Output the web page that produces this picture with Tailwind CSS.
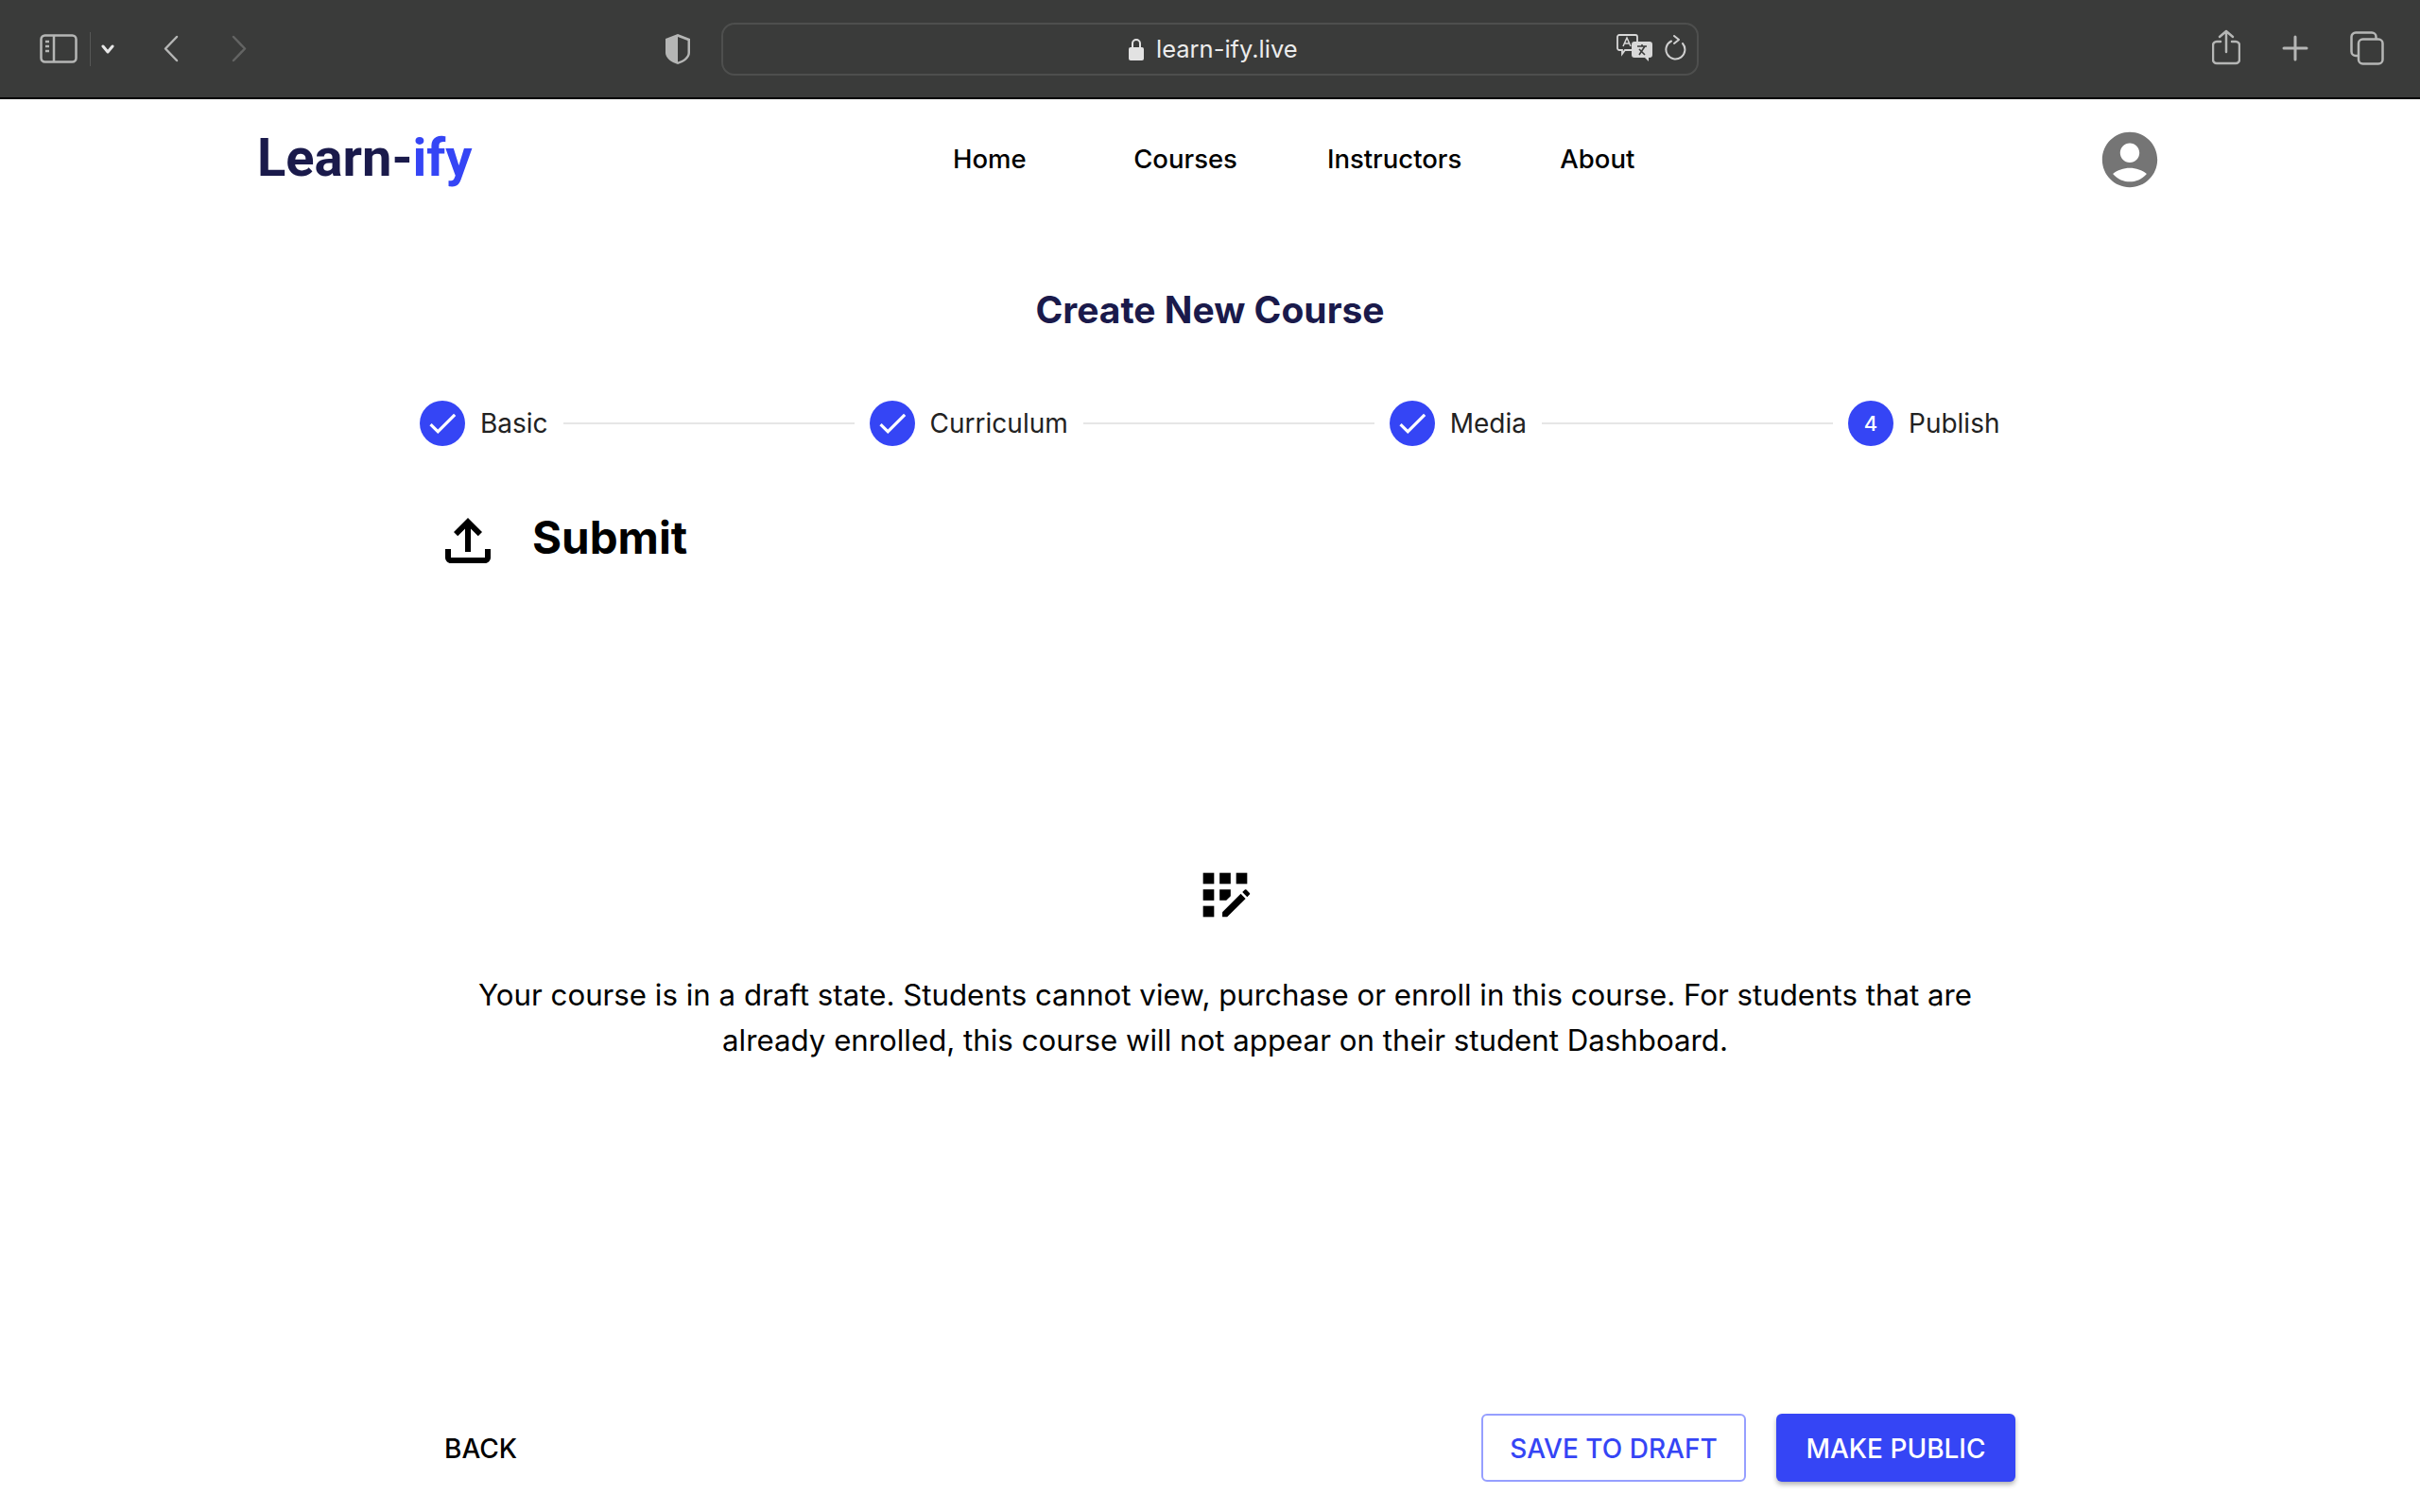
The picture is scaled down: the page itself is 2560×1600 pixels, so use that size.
<!DOCTYPE html>
<html lang="en">
<head>
    <meta charset="UTF-8">
    <title>Learn-ify</title>
    <script src="https://cdn.jsdelivr.net/npm/@tailwindcss/browser@4"></script>
</head>
<body class="bg-white text-black font-[family-name:Inter,sans-serif] w-[2560px] h-[1600px] overflow-hidden">
    <!-- browser toolbar -->
    <div class="flex items-center h-[105px] bg-[#3a3b3a] border-b-2 border-black">
        <svg class="ml-[42px] w-[40px] h-[31px]" viewBox="0 0 40 31" fill="none" stroke="#b5b6b5" stroke-width="2.5">
            <rect x="1.5" y="1.5" width="37" height="28" rx="4"/>
            <path d="M15 1.5v28M6 8h4M6 13h4M6 18h4"/>
        </svg>
        <div class="ml-[13px] w-[1px] h-[36px] bg-[#575857]"></div>
        <svg class="ml-[11px] w-[14px] h-[10px]" viewBox="0 0 14 10" fill="none" stroke="#e8e8e8" stroke-width="3" stroke-linecap="round" stroke-linejoin="round"><path d="M2 2l5 6 5-6"/></svg>
        <svg class="ml-[51px] w-[17px] h-[29px]" viewBox="0 0 17 29" fill="none" stroke="#b5b6b5" stroke-width="2.5" stroke-linecap="round" stroke-linejoin="round"><path d="M15 2L3 14.500 15 27"/></svg>
        <svg class="ml-[56px] w-[17px] h-[29px]" viewBox="0 0 17 29" fill="none" stroke="#636463" stroke-width="2.5" stroke-linecap="round" stroke-linejoin="round"><path d="M2 2l12 12.500L2 27"/></svg>
        <svg class="ml-[441px] w-[28px] h-[34px]" viewBox="0 0 28 34">
            <path d="M14 1L27 6v15c0 5-6 10-13 12C7 31 1 26 1 21V6z" fill="#b5b6b5"/>
            <path d="M14 4l10.500 4v13c0 4-5 8-10.500 9.500z" fill="#3a3b3a"/>
        </svg>
        <div class="relative ml-[32px] flex items-center w-[1034px] h-[56px] pl-[429px] border-2 border-[#4e4f4e] rounded-[14px]">
            <svg class="w-[16px] h-[24px]" viewBox="0 0 16 24" fill="none">
                <path d="M4 11V6a4 4 0 018 0v5" stroke="#e2e2e2" stroke-width="2"/>
                <rect x="0" y="10" width="16" height="14" rx="2" fill="#e2e2e2"/>
            </svg>
            <span class="ml-[13px] text-[25.5px] leading-none text-[#ececec]">learn-ify.live</span>
            <svg class="absolute left-[945px] top-[10px] w-[38px] h-[29px]" viewBox="0 0 38 29" fill="none">
                <path d="M3 1h17a2 2 0 012 2v12a2 2 0 01-2 2H9l-3 4v-4H3a2 2 0 01-2-2V3a2 2 0 012-2z" stroke="#d8d8d8" stroke-width="1.800"/>
                <path d="M7 13l4-9 4 9M8.500 10h5" stroke="#d8d8d8" stroke-width="1.500"/>
                <path d="M19 8h16a3 3 0 013 3v11a3 3 0 01-3 3h-1v4l-4-4H19a3 3 0 01-3-3V11a3 3 0 013-3z" fill="#d8d8d8"/>
                <path d="M22 13h10M27 11v2M24 22l6-9M30 22l-6-6" stroke="#3a3b3a" stroke-width="1.600"/>
            </svg>
            <svg class="absolute left-[995px] top-[11px] w-[24px] h-[28px]" viewBox="0 0 24 28" fill="none" stroke="#d0d0d0" stroke-width="2" stroke-linecap="round" stroke-linejoin="round">
                <path d="M8 6.500A10 10 0 1 0 20 9"/>
                <path d="M10 1l5 4-5 4" transform="translate(1 0)"/>
            </svg>
        </div>
        <svg class="ml-[543px] w-[30px] h-[38px] -mt-[3px]" viewBox="0 0 30 38" fill="none" stroke="#b5b6b5" stroke-width="2.500" stroke-linecap="round" stroke-linejoin="round">
            <path d="M9 13H5a4 4 0 00-4 4v15a4 4 0 004 4h20a4 4 0 004-4V17a4 4 0 00-4-4h-4"/>
            <path d="M15 24V2M8 8l7-6 7 6"/>
        </svg>
        <svg class="ml-[44px] w-[28px] h-[28px] -mt-[2px]" viewBox="0 0 28 28" fill="none" stroke="#b5b6b5" stroke-width="3" stroke-linecap="round"><path d="M14 2v24M2 14h24"/></svg>
        <svg class="ml-[44px] w-[36px] h-[36px] -mt-[1px]" viewBox="0 0 36 36" fill="none" stroke="#b5b6b5" stroke-width="2.500">
            <path d="M8 26H6a4.500 4.500 0 01-4.500-4.500V6A4.500 4.500 0 016 1.500h17A4.500 4.500 0 0127.500 6v2"/>
            <rect x="9" y="8.500" width="25.500" height="26" rx="4.500"/>
        </svg>
    </div>

    <!-- site nav -->
    <nav class="flex items-center h-[126px] pl-[272px] pr-[272px] text-[27.5px] font-medium leading-none">
        <div class="w-[736px] font-[family-name:Roboto,sans-serif] font-bold text-[56px] text-[#1a1a4b] -mt-[2px]">Learn-<span class="text-[#3545f5]">ify</span></div>
        <a class="mt-[1px] mr-[113.500px]">Home</a>
        <a class="mt-[1px] mr-[95px]">Courses</a>
        <a class="mt-[1px] mr-[104px]">Instructors</a>
        <a class="mt-[1px]">About</a>
        <svg class="ml-auto w-[70px] h-[70px] shrink-0 mt-[1px]" viewBox="0 0 24 24" fill="#757575"><path d="M12 2C6.480 2 2 6.480 2 12s4.480 10 10 10 10-4.480 10-10S17.520 2 12 2zm0 4c1.930 0 3.500 1.570 3.500 3.500S13.930 13 12 13s-3.500-1.570-3.500-3.500S10.070 6 12 6zm0 14c-2.030 0-4.430-.82-6.140-2.880C7.550 15.800 9.680 15 12 15s4.450.8 6.140 2.120C16.430 19.180 14.030 20 12 20z"/></svg>
    </nav>

    <main class="w-[1700px] ml-[444px]">
        <h1 class="w-[1672px] mt-[73px] text-center text-[39px] leading-[48px] font-bold text-[#1a1a4b]">Create New Course</h1>

        <!-- stepper -->
        <div class="flex items-center w-[1673px] mt-[72px] text-[28px] leading-none text-[#222222]">
            <div class="flex items-center justify-center w-[48px] h-[48px] rounded-full bg-[#3545f5]">
                <svg class="w-[38px] h-[38px]" viewBox="0 0 24 24" fill="#ffffff"><path d="M9 16.170L4.830 12l-1.420 1.410L9 19 21 7l-1.410-1.410z"/></svg>
            </div>
            <span class="ml-[16px]">Basic</span>
            <div class="flex-1 mx-[16px] h-[2px] bg-[#e6e6e6]"></div>
            <div class="flex items-center justify-center w-[48px] h-[48px] rounded-full bg-[#3545f5]">
                <svg class="w-[38px] h-[38px]" viewBox="0 0 24 24" fill="#ffffff"><path d="M9 16.170L4.830 12l-1.420 1.410L9 19 21 7l-1.410-1.410z"/></svg>
            </div>
            <span class="ml-[16px]">Curriculum</span>
            <div class="flex-1 mx-[16px] h-[2px] bg-[#e6e6e6]"></div>
            <div class="flex items-center justify-center w-[48px] h-[48px] rounded-full bg-[#3545f5]">
                <svg class="w-[38px] h-[38px]" viewBox="0 0 24 24" fill="#ffffff"><path d="M9 16.170L4.830 12l-1.420 1.410L9 19 21 7l-1.410-1.410z"/></svg>
            </div>
            <span class="ml-[16px]">Media</span>
            <div class="flex-1 mx-[16px] h-[2px] bg-[#e6e6e6]"></div>
            <div class="flex items-center justify-center w-[48px] h-[48px] rounded-full bg-[#3545f5] text-white text-[22px] font-medium">4</div>
            <span class="ml-[16px] w-[98px]">Publish</span>
        </div>

        <!-- submit heading -->
        <div class="flex items-center mt-[64px] ml-[15px]">
            <svg class="w-[72px] h-[72px]" viewBox="0 0 24 24" fill="#000000"><path d="M18 15v3H6v-3H4v3c0 1.100.9 2 2 2h12c1.100 0 2-.9 2-2v-3h-2zM7 9l1.410 1.410L11 7.830V16h2V7.830l2.590 2.580L17 9l-5-5-5 5z"/></svg>
            <h2 class="ml-[32px] text-[47.5px] leading-[56px] font-bold -mt-[6px]">Submit</h2>
        </div>

        <!-- draft notice -->
        <div class="flex flex-col items-center w-[1704px] mt-[304px]">
            <svg class="w-[70px] h-[70px]" viewBox="0 0 24 24" fill="#000000">
                <rect x="10" y="4" width="4" height="4"/><rect x="4" y="16" width="4" height="4"/><rect x="4" y="10" width="4" height="4"/><rect x="4" y="4" width="4" height="4"/><rect x="16" y="4" width="4" height="4"/>
                <polygon points="14,12.420 14,10 10,10 10,14 12.420,14"/>
                <path d="M20.880,11.290l-1.170-1.170c-0.160-0.160-0.420-0.160-0.580,0L18.250,11L20,12.750l0.880-0.880C21.040,11.710,21.040,11.450,20.880,11.290z"/>
                <polygon points="11,18.250 11,20 12.750,20 19.420,13.330 17.670,11.580"/>
            </svg>
            <p class="mt-[47px] w-[1640px] text-center text-[31.25px] leading-[48px]">Your course is in a draft state. Students cannot view, purchase or enroll in this course. For students that are already enrolled, this course will not appear on their student Dashboard.</p>
        </div>

        <!-- footer actions -->
        <div class="flex items-center w-[1688px] mt-[371px] text-[28px] leading-none font-medium">
            <button class="ml-[26px] mr-auto pt-[2px]">BACK</button>
            <button class="w-[280px] h-[72px] pt-[2px] border-2 border-[#969fff] rounded-[6px] text-[#3545f5]">SAVE TO DRAFT</button>
            <button class="ml-[32px] w-[253px] h-[72px] pt-[2px] rounded-[6px] bg-[#3545f5] text-white shadow-[0_3px_5px_rgba(0,0,0,0.3)]">MAKE PUBLIC</button>
        </div>
    </main>
</body>
</html>
